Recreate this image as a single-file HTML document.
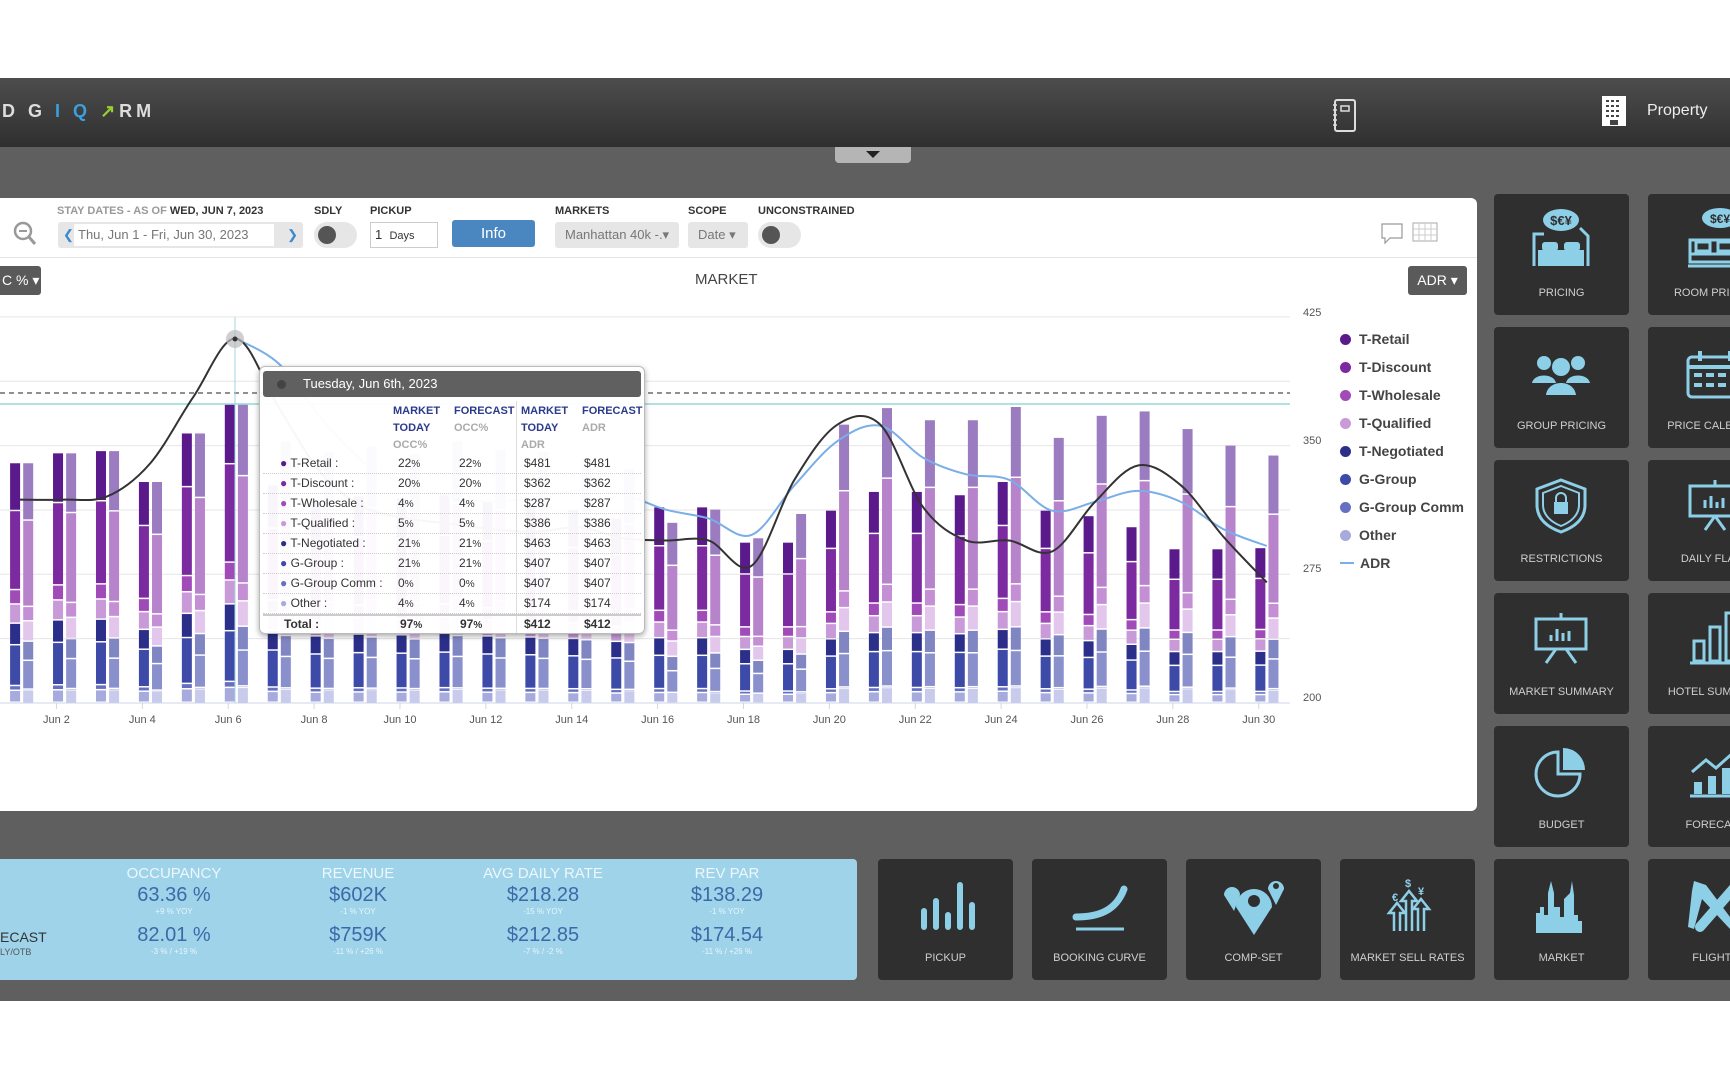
<!DOCTYPE html>
<html><head><meta charset="utf-8">
<style>
*{box-sizing:border-box;margin:0;padding:0}
body{width:1730px;height:1080px;background:#fff;font-family:"Liberation Sans",sans-serif;position:relative;overflow:hidden}
.abs{position:absolute}
#hdr{left:0;top:78px;width:1730px;height:69px;background:linear-gradient(#4d4d4d,#2f2f2f)}
#gray{left:0;top:147px;width:1730px;height:854px;background:#5f5f5f}
#panel{left:0;top:198px;width:1477px;height:613px;background:#fff;border-radius:0 6px 6px 0}
.lbl{font-size:11px;font-weight:bold;color:#333;font-family:"Liberation Sans Narrow","Liberation Sans",sans-serif;top:205px}
.fld{top:222px;height:26px;background:#e6e6e6;border-radius:3px;font-size:13px;color:#777;line-height:26px}
.tile{width:135px;height:121px;background:#2f2f2f;border-radius:4px;position:absolute}
.tile span{position:absolute;left:0;right:0;bottom:16px;text-align:center;color:#cfcfcf;font-size:11px;font-family:"Liberation Sans Narrow","Liberation Sans",sans-serif;white-space:nowrap}
.tile svg{position:absolute;left:32px;top:12px}
#blue{left:0;top:859px;width:857px;height:121px;background:#9ed3ea;border-radius:0 4px 4px 0}
.kc{position:absolute;width:180px;text-align:center;font-family:"Liberation Sans Narrow","Liberation Sans",sans-serif}
.kt{color:#eef7fb;font-size:15px}
.kv{color:#3b6aa8;font-size:20px;margin-top:2px}
.ks{color:#e8f5fb;font-size:8px}
.leg{position:absolute;left:1340px;font-size:14px;font-weight:bold;color:#444}
.leg i{display:inline-block;width:11px;height:11px;border-radius:50%;margin-right:8px;vertical-align:-1px}
#tt{left:259px;top:366px;width:386px;height:268px;background:rgba(255,255,255,.96);border:1px solid #bbb;border-radius:6px;box-shadow:0 2px 6px rgba(0,0,0,.35);font-size:12px;color:#333;font-family:"Liberation Sans Narrow","Liberation Sans",sans-serif}
#tt .h{position:absolute;left:3px;right:3px;top:4px;height:26px;background:#606060;border-radius:3px;color:#fff;font-size:13px;line-height:26px;padding-left:40px}
#tt .h:before{content:"";position:absolute;left:14px;top:9px;width:9px;height:9px;border-radius:50%;background:#444}
#tt div.r{position:absolute;left:3px;right:3px;height:20px;border-bottom:1px dotted #ccc}
#tt b.c{position:absolute;font-weight:bold;font-size:11px;line-height:17px}
</style></head><body>
<div id="hdr" class="abs"></div>
<div class="abs" style="left:2px;top:101px;font-size:18px;letter-spacing:4px;color:#ddd;font-weight:bold">D G <span style="color:#3aa0e0">I</span> <span style="color:#3aa0e0">Q</span> <span style="color:#9acd32">↗</span>RM</div>
<svg class="abs" style="left:1330px;top:98px" width="30" height="36" viewBox="0 0 30 36"><rect x="5" y="2" width="20" height="31" rx="2" fill="none" stroke="#ddd" stroke-width="2"/><rect x="11" y="8" width="8" height="5" fill="none" stroke="#ddd" stroke-width="1.5"/><path d="M3 7h4M3 12h4M3 17h4M3 22h4M3 27h4M25 8v22" stroke="#ddd" stroke-width="1.5"/></svg>
<svg class="abs" style="left:1602px;top:96px" width="24" height="30" viewBox="0 0 24 30"><rect x="0" y="0" width="24" height="30" fill="#fff"/><g fill="#444"><rect x="4" y="4" width="3" height="2"/><rect x="9" y="4" width="3" height="2"/><rect x="14" y="4" width="3" height="2"/><rect x="4" y="9" width="3" height="2"/><rect x="9" y="9" width="3" height="2"/><rect x="14" y="9" width="3" height="2"/><rect x="4" y="14" width="3" height="2"/><rect x="9" y="14" width="3" height="2"/><rect x="14" y="14" width="3" height="2"/><rect x="4" y="19" width="3" height="2"/><rect x="9" y="19" width="3" height="2"/><rect x="14" y="19" width="3" height="2"/><rect x="8" y="24" width="8" height="5"/></g></svg>
<div class="abs" style="left:1647px;top:102px;color:#eee;font-size:16px">Property</div>
<div id="gray" class="abs"></div>
<div class="abs" style="left:835px;top:147px;width:76px;height:16px;background:#b5b5b5;border-radius:0 0 4px 4px"></div>
<div class="abs" style="left:866px;top:151px;width:0;height:0;border-left:7px solid transparent;border-right:7px solid transparent;border-top:7px solid #222"></div>
<div id="panel" class="abs"></div>
<svg class="abs" style="left:12px;top:220px" width="26" height="28" viewBox="0 0 26 28"><circle cx="11" cy="11" r="8" fill="none" stroke="#999" stroke-width="2.5"/><path d="M7 11h8" stroke="#999" stroke-width="2"/><path d="M17 17l6 7" stroke="#999" stroke-width="3"/></svg>
<div class="abs lbl" style="left:57px;color:#999">STAY DATES - AS OF <span style="color:#333">WED, JUN 7, 2023</span></div>
<div class="abs fld" style="left:58px;width:245px"><span style="color:#3a8ad0;margin-left:5px">❮</span><span style="position:absolute;left:16px;width:200px;top:2px;height:22px;background:#fff;line-height:22px;padding-left:4px">Thu, Jun 1 - Fri, Jun 30, 2023</span><span style="position:absolute;right:5px;color:#3a8ad0">❯</span></div>
<div class="abs lbl" style="left:314px">SDLY</div>
<div class="abs" style="left:314px;top:222px;width:43px;height:26px;background:#e6e6e6;border-radius:13px"><div style="margin:4px 0 0 4px;width:18px;height:18px;border-radius:50%;background:#555"></div></div>
<div class="abs lbl" style="left:370px">PICKUP</div>
<div class="abs" style="left:370px;top:222px;width:68px;height:26px;border:1px solid #ccc;font-size:13px;line-height:24px;padding-left:4px;color:#333">1 &nbsp;<span style="font-size:11px">Days</span></div>
<div class="abs" style="left:452px;top:220px;width:83px;height:27px;background:#4a86c0;border-radius:3px;color:#fff;text-align:center;line-height:27px;font-size:15px">Info</div>
<div class="abs lbl" style="left:555px">MARKETS</div>
<div class="abs fld" style="left:555px;width:124px;padding-left:10px">Manhattan 40k -.▾</div>
<div class="abs lbl" style="left:688px">SCOPE</div>
<div class="abs fld" style="left:688px;width:60px;padding-left:10px">Date ▾</div>
<div class="abs lbl" style="left:758px">UNCONSTRAINED</div>
<div class="abs" style="left:758px;top:222px;width:43px;height:26px;background:#e6e6e6;border-radius:13px"><div style="margin:4px 0 0 4px;width:18px;height:18px;border-radius:50%;background:#555"></div></div>
<svg class="abs" style="left:1380px;top:221px" width="60" height="24" viewBox="0 0 60 24"><path d="M2 3h20v14H10l-5 5v-5H2z" fill="none" stroke="#999" stroke-width="1.2"/><rect x="33" y="2" width="24" height="18" fill="none" stroke="#aaa"/><path d="M33 8h24M33 14h24M39 2v18M45 2v18M51 2v18" stroke="#ccc"/></svg>
<div class="abs" style="left:0;top:257px;width:1477px;height:1px;background:#e5e5e5"></div>
<div class="abs" style="left:0;top:266px;width:41px;height:29px;background:#5a5a5a;border-radius:0 3px 3px 0;color:#fff;font-size:14px;line-height:29px;padding-left:2px">C % ▾</div>
<div class="abs" style="left:1408px;top:266px;width:59px;height:29px;background:#5a5a5a;border-radius:3px;color:#fff;font-size:14px;line-height:29px;text-align:center">ADR ▾</div>
<div class="abs" style="left:695px;top:271px;font-size:15px;color:#444">MARKET</div>
<svg id="ch" class="abs" style="left:0;top:0" width="1480" height="760"></svg>
<div class="leg" style="top:331px"><i style="background:#5a1a8c"></i>T-Retail</div>
<div class="leg" style="top:359px"><i style="background:#7b2aa0"></i>T-Discount</div>
<div class="leg" style="top:387px"><i style="background:#a04bb8"></i>T-Wholesale</div>
<div class="leg" style="top:415px"><i style="background:#c99ad8"></i>T-Qualified</div>
<div class="leg" style="top:443px"><i style="background:#2b2f8a"></i>T-Negotiated</div>
<div class="leg" style="top:471px"><i style="background:#3d4aa8"></i>G-Group</div>
<div class="leg" style="top:499px"><i style="background:#6670c0"></i>G-Group Comm</div>
<div class="leg" style="top:527px"><i style="background:#a6aadc"></i>Other</div>
<div class="leg" style="top:555px"><i style="background:none;border-radius:0;height:2px;width:14px;background:#7aaee8;vertical-align:4px;margin-right:6px"></i>ADR</div>
<div id="tt" class="abs"><div class="h">Tuesday, Jun 6th, 2023</div></div>
<div id="tiles"></div>
<div id="blue" class="abs">
<div class="kc" style="left:84px;top:6px"><div class="kt">OCCUPANCY</div><div class="kv">63.36 %</div><div class="ks">+9 % YOY</div><div class="kv" style="margin-top:8px">82.01 %</div><div class="ks">-3 % / +19 %</div></div>
<div class="kc" style="left:268px;top:6px"><div class="kt">REVENUE</div><div class="kv">$602K</div><div class="ks">-1 % YOY</div><div class="kv" style="margin-top:8px">$759K</div><div class="ks">-11 % / +26 %</div></div>
<div class="kc" style="left:453px;top:6px"><div class="kt">AVG DAILY RATE</div><div class="kv">$218.28</div><div class="ks">-15 % YOY</div><div class="kv" style="margin-top:8px">$212.85</div><div class="ks">-7 % / -2 %</div></div>
<div class="kc" style="left:637px;top:6px"><div class="kt">REV PAR</div><div class="kv">$138.29</div><div class="ks">-1 % YOY</div><div class="kv" style="margin-top:8px">$174.54</div><div class="ks">-11 % / +26 %</div></div>
<div style="position:absolute;left:0;top:70px;font-size:14px;color:#333;font-family:'Liberation Sans Narrow','Liberation Sans',sans-serif">ECAST</div>
<div style="position:absolute;left:0;top:88px;font-size:9px;color:#555">LY/OTB</div>
</div>
<script>
var ch=document.getElementById('ch'),h='';
function y(v){return 703-(v-200)*1.716}
[425,387.5,350,312.5,275,237.5].forEach(function(v){h+='<line x1="0" x2="1290" y1="'+y(v)+'" y2="'+y(v)+'" stroke="#e6e6e6"/>'});
h+='<line x1="0" x2="1290" y1="703" y2="703" stroke="#ccd6eb"/>';
[[425,316],[350,444],[275,572],[200,701]].forEach(function(a){h+='<text x="1303" y="'+(a[1])+'" font-size="11" fill="#555" font-family="Liberation Sans">'+a[0]+'</text>'});
var S=1.103;
function dx(d){return 13.5+42.94*(d-1)}
var mTop=[420,411,409,437,393,367,440,455,450,452,448,455,458,462,470,460,460,492,492,463,446,446,449,437,463,468,478,498,498,497];
var fTop=[420,411,409,437,393,367,400,410,405,412,400,408,410,415,425,474,462,488,466,385,370,381,381,369,397,377,373,389,404,413];
var mc=['#5a1a8c','#7b2aa0','#a04bb8','#c99ad8','#2b2f8a','#3d4aa8','#6670c0','#a6aadc'];
var fc=['#9b7cc0','#b784cc','#c48fd4','#e3c6ec','#7f86c2','#8a90cc','#9ea3d6','#c8cbec'];
var mp=[.2,.33,.06,.08,.09,.17,.02,.05],fp=[.24,.36,.06,.085,.08,.12,.005,.055];
function bar(x,top,cols,p){var tot=703-top,cy=top;for(var i=0;i<8;i++){var hh=tot*p[i];h+='<rect x="'+x+'" y="'+cy+'" width="10" height="'+Math.max(hh-1.5,0.5)+'" fill="'+cols[i]+'"/>';cy+=hh;}}
for(var d=1;d<=30;d++){var x=dx(d);bar(x-3.4,mTop[d-1]*S,mc,mp);bar(x+9.7,fTop[d-1]*S,fc,fp);
if(d%2==0){h+='<line x1="'+x+'" x2="'+x+'" y1="703" y2="709" stroke="#ccd6eb"/><text x="'+x+'" y="723" text-anchor="middle" font-size="11" fill="#555" font-family="Liberation Sans">Jun '+d+'</text>';}}
h+='<line x1="0" x2="1290" y1="393" y2="393" stroke="#222" stroke-dasharray="5,4"/>';
h+='<line x1="0" x2="1290" y1="404" y2="404" stroke="#7fd0d0" stroke-width="1.3"/>';
h+='<line x1="235" x2="235" y1="317" y2="703" stroke="#9fd7e0"/>';
function path(pts){var s='M'+pts[0][0]+' '+pts[0][1];for(var i=0;i<pts.length-1;i++){var p0=pts[i-1]||pts[i],p1=pts[i],p2=pts[i+1],p3=pts[i+2]||p2;
s+=' C'+(p1[0]+(p2[0]-p0[0])/6)+' '+(p1[1]+(p2[1]-p0[1])/6)+' '+(p2[0]-(p3[0]-p1[0])/6)+' '+(p2[1]-(p3[1]-p1[1])/6)+' '+p2[0]+' '+p2[1];}return s}
var bl=[453,453,450,420,360,307,370,430,460,470,475,480,482,478,488,490,490,513,435,385,385,460,490,490,500,455,422,440,487,528];
var bb=[null,null,null,null,null,307,330,380,420,440,450,455,450,445,448,462,470,485,440,400,386,415,430,435,463,455,445,455,480,495];
var pb=[],pk=[];for(var d=1;d<=30;d++){pk.push([dx(d)+8,bl[d-1]*S]);if(bb[d-1])pb.push([dx(d)+8,bb[d-1]*S]);}
pk[0][0]=20;
h+='<path d="'+path(pb)+'" fill="none" stroke="#7aaee8" stroke-width="2"/>';
h+='<path d="'+path(pk)+'" fill="none" stroke="#333" stroke-width="2"/>';
h+='<circle cx="235" cy="339" r="9" fill="#bbb" opacity=".7"/><circle cx="235" cy="339" r="2.5" fill="#333"/>';
ch.innerHTML=h;
var tt=document.getElementById('tt'),t='';
function c(x,yy,txt,col){t+='<b class="c" style="left:'+x+'px;top:'+yy+'px;color:'+col+'">'+txt+'</b>'}
c(133,36,'MARKET','#2b3a8c');c(133,53,'TODAY','#2b3a8c');c(133,70,'OCC%','#aaa');
c(194,36,'FORECAST','#2b3a8c');c(194,53,'OCC%','#aaa');
c(261,36,'MARKET','#2b3a8c');c(261,53,'TODAY','#2b3a8c');c(261,70,'ADR','#aaa');
c(322,36,'FORECAST','#2b3a8c');c(322,53,'ADR','#aaa');
t+='<div style="position:absolute;left:256px;top:34px;width:1px;height:232px;background:#ddd"></div>';
var rows=[['T-Retail','22','$481','#5a1a8c'],['T-Discount','20','$362','#7b2aa0'],['T-Wholesale','4','$287','#a04bb8'],['T-Qualified','5','$386','#c99ad8'],['T-Negotiated','21','$463','#2b2f8a'],['G-Group','21','$407','#3d4aa8'],['G-Group Comm','0','$407','#6670c0'],['Other','4','$174','#a6aadc']];
rows.forEach(function(r,i){var yy=87+i*20;t+='<div class="r" style="top:'+yy+'px"></div>';
t+='<div style="position:absolute;left:20px;top:'+(yy+2)+'px"><span style="color:'+r[3]+'">●</span> '+r[0]+' :</div>';
t+='<div style="position:absolute;left:138px;top:'+(yy+2)+'px">'+r[1]+'<small>%</small></div><div style="position:absolute;left:199px;top:'+(yy+2)+'px">'+r[1]+'<small>%</small></div>';
t+='<div style="position:absolute;left:264px;top:'+(yy+2)+'px">'+r[2]+'</div><div style="position:absolute;left:324px;top:'+(yy+2)+'px">'+r[2]+'</div>';});
t+='<div style="position:absolute;left:3px;right:3px;top:247px;height:2px;background:#ccc"></div>';
t+='<b style="position:absolute;left:24px;top:250px">Total :</b><b style="position:absolute;left:140px;top:250px">97<small>%</small></b><b style="position:absolute;left:200px;top:250px">97<small>%</small></b><b style="position:absolute;left:264px;top:250px">$412</b><b style="position:absolute;left:324px;top:250px">$412</b>';
tt.insertAdjacentHTML('beforeend',t);
var B='#8ecfe8';
var icons={
PRICING:'<ellipse cx="35" cy="14" rx="18" ry="11" fill="'+B+'"/><text x="35" y="19" text-anchor="middle" font-size="13" font-weight="bold" fill="#2f2f2f" font-family="Liberation Sans">$€¥</text><path d="M8 60V28h10M62 60V30l-8-8" stroke="'+B+'" stroke-width="3" fill="none"/><rect x="12" y="44" width="46" height="16" fill="'+B+'"/><rect x="16" y="36" width="16" height="9" rx="3" fill="'+B+'"/><rect x="38" y="36" width="16" height="9" rx="3" fill="'+B+'"/>',
ROOM:'<ellipse cx="40" cy="12" rx="18" ry="10" fill="'+B+'"/><text x="40" y="17" text-anchor="middle" font-size="12" font-weight="bold" fill="#2f2f2f" font-family="Liberation Sans">$€¥</text><rect x="10" y="34" width="50" height="22" fill="none" stroke="'+B+'" stroke-width="3"/><rect x="16" y="36" width="14" height="9" fill="none" stroke="'+B+'" stroke-width="3"/><rect x="38" y="36" width="14" height="9" fill="none" stroke="'+B+'" stroke-width="3"/><path d="M8 60h54M10 48h50" stroke="'+B+'" stroke-width="3"/>',
GROUP:'<circle cx="18" cy="24" r="7" fill="'+B+'"/><circle cx="52" cy="24" r="7" fill="'+B+'"/><circle cx="35" cy="28" r="9" fill="'+B+'"/><path d="M6 44c2-10 22-10 24 0zM40 44c2-10 22-10 24 0zM20 56c2-16 28-16 30 0z" fill="'+B+'"/>',
CAL:'<rect x="8" y="18" width="54" height="40" rx="4" fill="none" stroke="'+B+'" stroke-width="3"/><path d="M8 28h54M20 12v10M50 12v10" stroke="'+B+'" stroke-width="4"/><g fill="'+B+'"><rect x="14" y="34" width="8" height="4"/><rect x="26" y="34" width="8" height="4"/><rect x="38" y="34" width="8" height="4"/><rect x="50" y="34" width="8" height="4"/><rect x="14" y="44" width="8" height="4"/><rect x="26" y="44" width="8" height="4"/><rect x="38" y="44" width="8" height="4"/></g>',
REST:'<path d="M35 8l24 9v16c0 14-10 22-24 27C21 55 11 47 11 33V17z" fill="none" stroke="'+B+'" stroke-width="3"/><path d="M35 14l18 7v12c0 10-8 17-18 21C25 50 17 43 17 33V21z" fill="none" stroke="'+B+'" stroke-width="2"/><rect x="28" y="30" width="14" height="12" fill="'+B+'"/><path d="M30 30v-4a5 5 0 0110 0v4" stroke="'+B+'" stroke-width="2" fill="none"/>',
FLASH:'<rect x="10" y="14" width="50" height="30" fill="none" stroke="'+B+'" stroke-width="3"/><path d="M35 8v6M35 44l-10 14M35 44l10 14M25 36v-8M31 36v-12M37 36v-6M43 36v-10" stroke="'+B+'" stroke-width="3"/>',
MSUM:'<rect x="10" y="14" width="50" height="30" fill="none" stroke="'+B+'" stroke-width="3"/><path d="M35 8v6M30 44l-10 14M40 44l10 14M25 36v-6M31 36v-12M37 36v-8M43 36v-10" stroke="'+B+'" stroke-width="3"/>',
HSUM:'<path d="M10 58h50" stroke="'+B+'" stroke-width="3"/><rect x="14" y="36" width="10" height="20" fill="none" stroke="'+B+'" stroke-width="3"/><rect x="30" y="22" width="10" height="34" fill="none" stroke="'+B+'" stroke-width="3"/><rect x="46" y="8" width="10" height="48" fill="none" stroke="'+B+'" stroke-width="3"/>',
BUDGET:'<path d="M32 14a22 22 0 1022 22H32z" fill="none" stroke="'+B+'" stroke-width="3"/><path d="M37 10a22 22 0 0122 22H37z" fill="'+B+'"/>',
FORE:'<path d="M10 58h52M12 34l14-12 10 8 18-16" stroke="'+B+'" stroke-width="3" fill="none"/><rect x="14" y="44" width="8" height="12" fill="'+B+'"/><rect x="28" y="38" width="8" height="18" fill="'+B+'"/><rect x="42" y="30" width="8" height="26" fill="'+B+'"/>',
PICKUP:'<g stroke="'+B+'" stroke-width="6" stroke-linecap="round"><path d="M14 56V40M26 56V30M38 56V44M50 56V14M62 56V34"/></g>',
CURVE:'<path d="M12 46c22 0 40-6 48-28" stroke="'+B+'" stroke-width="7" fill="none" stroke-linecap="round"/><path d="M12 58h48" stroke="'+B+'" stroke-width="3"/>',
COMP:'<path d="M36 64L18 36a14 14 0 1136 0z" fill="'+B+'"/><circle cx="36" cy="30" r="6" fill="#2f2f2f"/><path d="M16 40L6 24a8 8 0 1116 0z" fill="'+B+'"/><path d="M58 34L50 18a8 8 0 1116 0z" fill="'+B+'"/><circle cx="58" cy="15" r="3" fill="#2f2f2f"/>',
MSR:'<g stroke="'+B+'" stroke-width="2.5" fill="none"><path d="M22 60V42h-5l8-10 8 10h-5v18M34 60V30h-5l8-10 8 10h-5v30M46 60V38h-5l8-10 8 10h-5v22"/></g><text x="20" y="30" font-size="11" fill="'+B+'" font-weight="bold" font-family="Liberation Sans">€</text><text x="33" y="16" font-size="11" fill="'+B+'" font-weight="bold" font-family="Liberation Sans">$</text><text x="46" y="24" font-size="11" fill="'+B+'" font-weight="bold" font-family="Liberation Sans">¥</text>',
MARKET:'<path d="M10 62V42h4v-6h4v8h4V22l3-12 3 12v14h6v10h4V28l6-6 2-12 2 14v20h4v6h4v12z" fill="'+B+'"/>',
FLIGHT:'<path d="M14 10l12 4 30 40-6 4-28-30-8 30-6-2 4-36z" fill="'+B+'"/><path d="M60 10l-40 46" stroke="'+B+'" stroke-width="10" stroke-linecap="round"/>'};
var tl=[[1494,194,'PRICING','PRICING'],[1648,194,'ROOM PRICING','ROOM'],[1494,327,'GROUP PRICING','GROUP'],[1648,327,'PRICE CALENDAR','CAL'],[1494,460,'RESTRICTIONS','REST'],[1648,460,'DAILY FLASH','FLASH'],[1494,593,'MARKET SUMMARY','MSUM'],[1648,593,'HOTEL SUMMARY','HSUM'],[1494,726,'BUDGET','BUDGET'],[1648,726,'FORECAST','FORE'],[878,859,'PICKUP','PICKUP'],[1032,859,'BOOKING CURVE','CURVE'],[1186,859,'COMP-SET','COMP'],[1340,859,'MARKET SELL RATES','MSR'],[1494,859,'MARKET','MARKET'],[1648,859,'FLIGHTS','FLIGHT']];
var o='';tl.forEach(function(a){o+='<div class="tile" style="left:'+a[0]+'px;top:'+a[1]+'px"><svg width="72" height="70" viewBox="0 0 72 70">'+icons[a[3]]+'</svg><span>'+a[2]+'</span></div>'});
document.getElementById('tiles').innerHTML=o;
</script>
</body></html>
